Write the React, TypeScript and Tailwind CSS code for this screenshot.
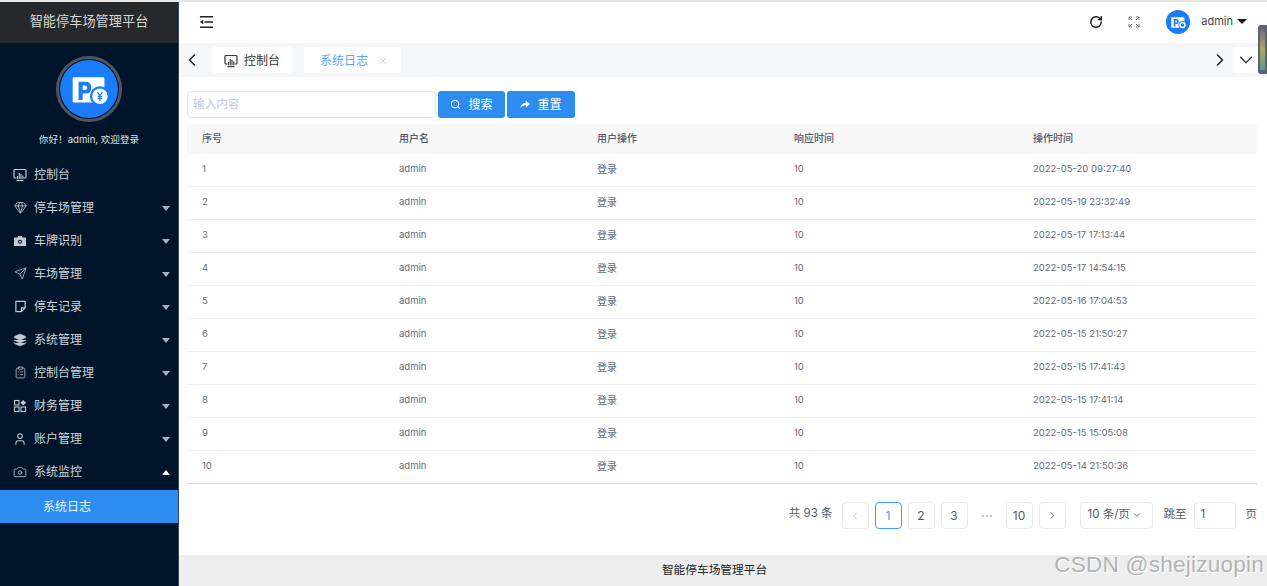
import React from "react";
import { RotateCw, Search, ChevronLeft, ChevronRight, ChevronDown, X, Gem, Camera, Send, Layers, ClipboardList, User, MoreHorizontal } from "lucide-react";

const FONT = { fontFamily: '"Inter","Noto Sans CJK SC",sans-serif' };

function Monitor({ className = "" }: { className?: string }) {
  return (
    <svg viewBox="0 0 14 14" className={className} fill="none" stroke="currentColor">
      <path d="M3.500 10H2A1 1 0 0 1 1 9V2.500A1 1 0 0 1 2 1.500H12A1 1 0 0 1 13 2.500V9A1 1 0 0 1 12 10H10.500" strokeWidth="1.200" />
      <path d="M4.500 11V8M6.300 11V5M8 11V6M9.800 11V7.500" strokeWidth="1.100" />
      <path d="M3.500 12.500H10.500" strokeWidth="1.300" />
    </svg>
  );
}
function Apps({ className = "" }: { className?: string }) {
  return (
    <svg viewBox="0 0 14 14" className={className} fill="none" stroke="currentColor" strokeWidth="1.100">
      <rect x="1.500" y="1.500" width="4.500" height="4.500" />
      <rect x="1.500" y="8" width="4.500" height="4.500" />
      <rect x="8" y="8" width="4.500" height="4.500" />
      <path d="M10.200 1 13 3.800 10.200 6.600 7.400 3.800Z" fill="currentColor" stroke="none" />
    </svg>
  );
}
function Note({ className = "" }: { className?: string }) {
  return (
    <svg viewBox="0 0 14 14" className={className} fill="none" stroke="currentColor" strokeWidth="1.300">
      <path d="M2 1.500H12V8.500L8 12.500H2ZM12 8.500H8V12.500" strokeLinejoin="round" />
    </svg>
  );
}
function FilledCamera({ className = "" }: { className?: string }) {
  return (
    <svg viewBox="0 0 14 14" className={className}>
      <path d="M1.500 3.500H4.500L5.200 2H8.800L9.500 3.500H12.500A.6.6 0 0 1 13 4V12H1V4A.6.6 0 0 1 1.500 3.500Z" fill="currentColor" />
      <circle cx="7" cy="7.800" r="2" fill="#00152a" />
      <circle cx="7" cy="7.800" r="1" fill="currentColor" />
    </svg>
  );
}
function ParkingLogo({ small = false }: { small?: boolean }) {
  return (
    <svg viewBox="0 0 64 64" className="w-full h-full">
      <circle cx="32" cy="32" r="32" fill="#1a7cf7" />
      <rect x="14" y="19" width="35" height="28" rx="1.500" fill="#fff" />
      <path d="M20.500 44V24H28Q34.500 24 34.500 30.500T28 37H25V44Z M25 28V33H27.500Q30 33 30 30.500T27.500 28Z" fill="#1a7cf7" fillRule="evenodd" />
      <circle cx="44" cy="40" r="11" fill="#1a7cf7" />
      <circle cx="44" cy="40" r="8.500" fill="#fff" />
      {!small && <path d="M41.200 35.500 44 39.500 46.800 35.500M44 39.500V45M41.500 40.500H46.500M41.500 42.700H46.500" stroke="#1a7cf7" strokeWidth="1.400" fill="none" />}
      {small && <circle cx="44" cy="40" r="4.500" fill="#1a7cf7" />}
    </svg>
  );
}

const menu: { label: string; icon: React.ReactNode; caret?: "down" | "up" }[] = [
  { label: "控制台", icon: <Monitor className="w-[14px] h-[14px]" /> },
  { label: "停车场管理", icon: <Gem className="w-[13px] h-[13px]" strokeWidth={1.6} />, caret: "down" },
  { label: "车牌识别", icon: <FilledCamera className="w-[14px] h-[14px]" />, caret: "down" },
  { label: "车场管理", icon: <Send className="w-[13px] h-[13px]" strokeWidth={1.4} />, caret: "down" },
  { label: "停车记录", icon: <Note className="w-[13px] h-[13px]" />, caret: "down" },
  { label: "系统管理", icon: <Layers className="w-[14px] h-[14px]" fill="currentColor" strokeWidth={1.2} />, caret: "down" },
  { label: "控制台管理", icon: <ClipboardList className="w-[13px] h-[13px]" strokeWidth={1.4} />, caret: "down" },
  { label: "财务管理", icon: <Apps className="w-[14px] h-[14px]" />, caret: "down" },
  { label: "账户管理", icon: <User className="w-[14px] h-[14px]" strokeWidth={1.8} />, caret: "down" },
  { label: "系统监控", icon: <Camera className="w-[14px] h-[14px]" strokeWidth={1.4} />, caret: "up" },
];

const rows = [
  "2022-05-20 09:27:40",
  "2022-05-19 23:32:49",
  "2022-05-17 17:13:44",
  "2022-05-17 14:54:15",
  "2022-05-16 17:04:53",
  "2022-05-15 21:50:27",
  "2022-05-15 17:41:43",
  "2022-05-15 17:41:14",
  "2022-05-15 15:05:08",
  "2022-05-14 21:50:36",
];

function Caret({ dir }: { dir: "down" | "up" }) {
  return dir === "down" ? (
    <span className="ml-auto mr-[8px] mt-[2px] w-0 h-0 border-x-[4.5px] border-x-transparent border-t-[5px] border-t-[#aab2bb]" />
  ) : (
    <span className="ml-auto mr-[8px] mt-[2px] w-0 h-0 border-x-[4.5px] border-x-transparent border-b-[5px] border-b-white" />
  );
}

function PageBtn({ children, active = false, muted = false }: { children: React.ReactNode; active?: boolean; muted?: boolean }) {
  return (
    <div className={`w-[27px] h-[27px] rounded-[4px] border flex items-center justify-center text-[12px] ${active ? "border-[#409eff] text-[#409eff]" : "border-[#ebebeb]"} ${muted ? "text-[#c0c4cc]" : active ? "" : "text-[#515a6e]"}`}>
      {children}
    </div>
  );
}

const colClass = ["w-[212px] pl-[15px]", "w-[198px]", "w-[197px]", "w-[239px]", "flex-1"];

export default function App() {
  return (
    <div style={FONT} className="relative w-[1267px] h-[586px] overflow-hidden bg-white flex flex-col">
      <div className="h-[2px] bg-[#e6e6e6] shrink-0" />
      <div className="flex flex-1 min-h-0">
        <aside className="w-[179px] shrink-0 bg-[#00152a] flex flex-col border-r border-[#33465a]">
          <div className="h-[41px] shrink-0 bg-[#26282c] text-[#d8d8d8] text-[13.2px] flex items-center justify-center pb-[2px]">智能停车场管理平台</div>
          <div className="flex flex-col items-center pt-[13px]">
            <div className="w-[66px] h-[66px] rounded-full border-[3px] border-[#50565e] bg-[#00152a] p-[1px]">
              <ParkingLogo />
            </div>
            <div className="mt-[10px] text-[9.6px] leading-[16px] text-[#dfe3e8]">你好！admin, 欢迎登录</div>
          </div>
          <nav className="mt-[12px] flex flex-col">
            {menu.map((m) => (
              <div key={m.label} className="h-[33px] flex items-center text-[12px] text-[#cfd3d8] pb-[4px]">
                <span className="w-[14px] ml-[13px] mr-[7px] flex justify-center text-[#c4c9cf]">{m.icon}</span>
                <span>{m.label}</span>
                {m.caret && <Caret dir={m.caret} />}
              </div>
            ))}
            <div className="h-[33px] bg-[#2d8cf0] flex items-center pl-[43px] text-[12px] text-[#e8f3ff]">系统日志</div>
          </nav>
        </aside>

        <main className="flex-1 min-w-0 flex flex-col">
          <header className="h-[41px] shrink-0 flex items-center pl-[20px] pr-[20px] pb-[2px]">
            <svg viewBox="0 0 16 14" className="w-[15px] h-[14px] text-[#222]" fill="none" stroke="currentColor" strokeWidth="1.600">
              <path d="M1 1.500H15M6 7H15M1 12.500H15" />
              <path d="M4.500 4.500 1 7 4.500 9.500Z" fill="currentColor" stroke="none" />
            </svg>
            <RotateCw className="ml-auto w-[14px] h-[14px] text-[#111]" strokeWidth={2.4} />
            <svg viewBox="0 0 12 12" className="ml-[25px] w-[12px] h-[12px] text-[#777]" fill="none" stroke="currentColor" strokeWidth="1">
              <path d="M1 4V1H4M8 1H11V4M11 8V11H8M4 11H1V8M1 1 4 4M11 1 8 4M11 11 8 8M1 11 4 8" />
            </svg>
            <div className="ml-[26px] w-[24px] h-[24px]"><ParkingLogo small /></div>
            <span className="ml-[11px] text-[11px] text-[#444]">admin</span>
            <span className="ml-[4px] w-0 h-0 border-x-[5px] border-x-transparent border-t-[5px] border-t-[#111]" />
          </header>

          <div className="h-[34px] shrink-0 bg-[#f5f6f8] flex items-center">
            <ChevronLeft className="ml-[3px] w-[20px] h-[20px] text-[#222]" strokeWidth={1.8} />
            <div className="ml-[10px] w-[80px] h-[26px] rounded-[3px] bg-white flex items-center justify-center pt-[2px] text-[12px] text-[#333]">
              <Monitor className="w-[14px] h-[14px] mr-[6px]" />
              控制台
            </div>
            <div className="ml-[12px] w-[97px] h-[26px] rounded-[3px] bg-white flex items-center pl-[16px] pt-[2px] text-[12px] text-[#5aa9f5]">
              系统日志
              <X className="ml-[9px] w-[12px] h-[12px] text-[#bbb]" strokeWidth={1.3} />
            </div>
            <ChevronRight className="ml-auto w-[20px] h-[20px] text-[#222]" strokeWidth={1.8} />
            <div className="ml-[3px] mr-[8px] w-[26px] h-[26px] bg-white rounded-[3px] flex items-center justify-center">
              <ChevronDown className="w-[22px] h-[22px] text-[#333]" strokeWidth={1.3} />
            </div>
          </div>

          <div className="flex-1 min-h-0 pl-[8px] pr-[10px] pt-[14px] flex flex-col">
            <div className="flex items-center h-[27px]">
              <div className="w-[249px] h-[27px] border border-[#e3e5e8] rounded-[4px] flex items-center pl-[5px] text-[11.7px] text-[#c5c8ce]">输入内容</div>
              <button className="ml-[2px] w-[67px] h-[27px] rounded-[3px] bg-[#2d8cf0] text-white text-[12px] flex items-center justify-center">
                <Search className="w-[11px] h-[11px] mr-[7px]" strokeWidth={2.2} />
                搜索
              </button>
              <button className="ml-[2px] w-[68px] h-[27px] rounded-[3px] bg-[#2d8cf0] text-white text-[12px] flex items-center justify-center">
                <svg viewBox="0 0 12 10" className="w-[10px] h-[9px] mr-[7px]" fill="currentColor"><path d="M7 0.500 12 4.500 7 8.500V6C4 6 2 7 0.500 9.500 1 5.500 3.500 3 7 3Z" /></svg>
                重置
              </button>
            </div>

            <div className="mt-[6px]">
              <div className="h-[30px] bg-[#f8f8f9] flex items-center text-[10px] font-medium text-[#515a6e] pb-[2px]">
                {["序号", "用户名", "用户操作", "响应时间", "操作时间"].map((h, i) => (
                  <div key={h} className={colClass[i]}>{h}</div>
                ))}
              </div>
              {rows.map((t, i) => (
                <div key={t} className={`h-[33px] flex items-center text-[9.5px] text-[#626b7d] pb-[1px] border-b ${i < 9 ? "border-[#eeeeee]" : "border-[#d9d9d9]"}`}>
                  <div className={colClass[0]}>{i + 1}</div>
                  <div className={colClass[1]}>admin</div>
                  <div className={`${colClass[2]} text-[10px]`}>登录</div>
                  <div className={colClass[3]}>10</div>
                  <div className={colClass[4]}>{t}</div>
                </div>
              ))}
            </div>

            <div className="mt-[18px] flex items-center justify-end text-[11.5px] text-[#515a6e]">
              <span className="mr-[9px] -mt-[4px]">共 93 条</span>
              <div className="flex items-center gap-[6px]">
                <PageBtn muted><ChevronLeft className="w-[10px] h-[10px]" /></PageBtn>
                <PageBtn active>1</PageBtn>
                <PageBtn>2</PageBtn>
                <PageBtn>3</PageBtn>
                <div className="w-[26px] flex justify-center text-[#bbb]"><MoreHorizontal className="w-[14px] h-[14px]" /></div>
                <PageBtn>10</PageBtn>
                <PageBtn><ChevronRight className="w-[11px] h-[11px]" /></PageBtn>
              </div>
              <div className="ml-[14px] w-[73px] h-[27px] border border-[#ebebeb] rounded-[4px] flex items-center pl-[7px] pb-[2px]">
                10 条/页
                <ChevronDown className="ml-[2px] w-[10px] h-[10px]" />
              </div>
              <span className="ml-[11px] -mt-[2px]">跳至</span>
              <div className="ml-[7px] w-[42px] h-[27px] border border-[#ebebeb] rounded-[4px] flex items-center pl-[6px] pb-[2px]">1</div>
              <span className="ml-[10px] -mt-[2px]">页</span>
            </div>
          </div>

          <footer className="h-[31px] shrink-0 bg-[#eeeeee] flex items-center justify-center text-[11.7px] text-[#222] pr-[17px]">智能停车场管理平台</footer>
        </main>
      </div>

      <div className="absolute right-0 top-[25px] w-[9px] h-[49px] rounded-l-[3px] bg-[#5c6470] py-[4px] pl-[2px]">
        <div className="w-[5px] h-full bg-gradient-to-b from-[#6b6f7c] via-[#b2a56a] to-[#4fa08c]" />
      </div>
      <div className="absolute right-[3px] bottom-[7px] text-[22.6px] leading-[28px] text-[#b4b4b4] tracking-[0.2px]" style={{ fontFamily: '"Liberation Sans",sans-serif', textShadow: "1px 1px 1px #fff" }}>CSDN @shejizuopin</div>
    </div>
  );
}
